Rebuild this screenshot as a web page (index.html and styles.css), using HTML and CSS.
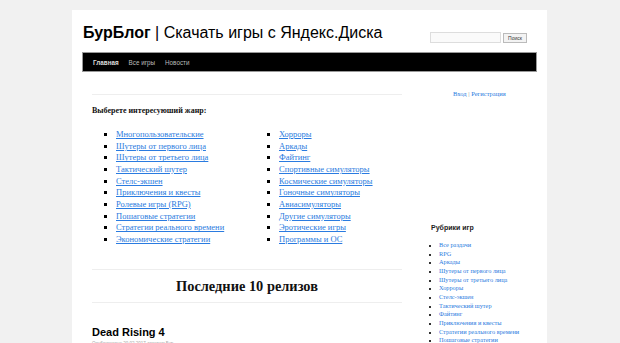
FILE: index.html
```html
<!DOCTYPE html>
<html lang="ru">
<head>
<meta charset="utf-8">
<title>БурБлог</title>
<link rel="stylesheet" href="styles.css">
</head>
<body>
<div class="wrapper">
  <header class="header">
    <h1 class="site-title"><b>БурБлог</b> | Скачать игры с Яндекс.Диска</h1>
    <form class="search">
      <input class="search-input" type="text">
      <button class="search-btn" type="button">Поиск</button>
    </form>
  </header>
  <nav class="nav">
    <a class="nav-item active">Главная</a>
    <a class="nav-item">Все игры</a>
    <a class="nav-item">Новости</a>
  </nav>
  <div class="main">
    <div class="content">
      <p class="genre-title">Выберете интересуюший жанр:</p>
      <div class="genres">
        <ul class="genre-list">
          <li><a>Многопользовательские</a></li>
          <li><a>Шутеры от первого лица</a></li>
          <li><a>Шутеры от третьего лица</a></li>
          <li><a>Тактический шутер</a></li>
          <li><a>Стелс-экшен</a></li>
          <li><a>Приключения и квесты</a></li>
          <li><a>Ролевые игры (RPG)</a></li>
          <li><a>Пошаговые стратегии</a></li>
          <li><a>Стратегии реального времени</a></li>
          <li><a>Экономические стратегии</a></li>
        </ul>
        <ul class="genre-list">
          <li><a>Хорроры</a></li>
          <li><a>Аркады</a></li>
          <li><a>Файтинг</a></li>
          <li><a>Спортивные симуляторы</a></li>
          <li><a>Космические симуляторы</a></li>
          <li><a>Гоночные симуляторы</a></li>
          <li><a>Авиасимуляторы</a></li>
          <li><a>Другие симуляторы</a></li>
          <li><a>Эротические игры</a></li>
          <li><a>Программы и ОС</a></li>
        </ul>
      </div>
      <h2 class="releases">Последние 10 релизов</h2>
      <article class="post">
        <h3 class="post-title">Dead Rising 4</h3>
        <div class="post-meta">Опубликовано 20.02.2017 автором Бур</div>
      </article>
    </div>
    <aside class="sidebar">
      <div class="login"><a>Вход</a> | <a>Регистрация</a></div>
      <h4 class="widget-title">Рубрики игр</h4>
      <ul class="cat-list">
        <li><a>Все раздачи</a></li>
        <li><a>RPG</a></li>
        <li><a>Аркады</a></li>
        <li><a>Шутеры от первого лица</a></li>
        <li><a>Шутеры от третьего лица</a></li>
        <li><a>Хорроры</a></li>
        <li><a>Стелс-экшен</a></li>
        <li><a>Тактический шутер</a></li>
        <li><a>Файтинг</a></li>
        <li><a>Приключения и квесты</a></li>
        <li><a>Стратегии реального времени</a></li>
        <li><a>Пошаговые стратегии</a></li>
      </ul>
    </aside>
  </div>
</div>
</body>
</html>
```
FILE: styles.css
```css
html, body {
  margin: 0;
  padding: 0;
  background: #f1f1f1;
  overflow: hidden;
  height: 343px;
}
a { color: #2a7be0; cursor: pointer; }
.wrapper {
  margin: 10px 0 0 72px;
  width: 455px;
  padding: 0 10px;
  background: #fff;
  height: 400px;
}
.header {
  display: flex;
  justify-content: space-between;
  align-items: flex-start;
  padding: 13px 0 0 1px;
  height: 29px;
}
.site-title {
  margin: 0;
  font: 400 16px/20px "Liberation Sans", Arial, sans-serif;
  color: #000;
}
.site-title b { font-weight: 700; }
.search {
  display: flex;
  gap: 2px;
  margin: 9px 10px 0 0;
}
.search-input {
  width: 71px;
  height: 11px;
  padding: 0;
  border: 1px solid #ddd;
  box-sizing: border-box;
  background: #fafafa;
}
.search-btn {
  width: 24px;
  height: 10px;
  margin-top: 1px;
  padding: 0;
  border: 1px solid #bbb;
  background: #f3f3f3;
  font: 5px/8px "Liberation Sans", Arial, sans-serif;
  color: #333;
}
.nav {
  display: flex;
  align-items: center;
  height: 18px;
  background: #000;
  border: 1px solid #999;
  box-sizing: content-box;
  padding-left: 10px;
  gap: 10px;
}
.nav-item {
  font: 400 6.3px "Liberation Sans", Arial, sans-serif;
  color: #bbb;
}
.nav-item.active { color: #ddd; font-weight: 700; }
.main {
  display: flex;
  padding: 22px 0 0 10px;
}
.content {
  width: 310px;
  flex-shrink: 0;
  border-top: 1px solid #eee;
  font-family: "Liberation Serif", "Times New Roman", serif;
}
.genre-title {
  margin: 11px 0 0;
  font: 700 8px/10px "Liberation Serif", serif;
  color: #111;
}
.genres {
  display: flex;
  padding: 13px 0 0 0;
}
.genre-list {
  margin: 0;
  padding: 0 0 0 24px;
  box-sizing: border-box;
  list-style: square;
  font: 400 8.5px/11.67px "Liberation Serif", serif;
  width: 163px;
  flex-shrink: 0;
}
.genre-list + .genre-list { width: auto; flex: 1; }
.genre-list a { text-decoration: underline; }
.genre-list li::marker { color: #000; font-size: 9px; }
.releases {
  margin: 23px 0 0;
  border-top: 1px solid #eee;
  border-bottom: 1px solid #eee;
  text-align: center;
  font: 700 14.4px/32px "Liberation Serif", serif;
  color: #111;
  height: 32px;
}
.post { padding-top: 23px; }
.post-title {
  margin: 0;
  font: 700 11px/13px "Liberation Sans", Arial, sans-serif;
  color: #000;
}
.post-meta {
  margin-top: 2px;
  font: 400 4.5px/6px "Liberation Sans", Arial, sans-serif;
  color: #aaa;
}
.sidebar {
  margin-left: 29px;
  width: 106px;
  font-family: "Liberation Serif", serif;
}
.login {
  margin: -5px 0 0 22px;
  font: 400 6.5px/10px "Liberation Serif", serif;
  color: #888;
}
.login a { text-decoration: none; }
.widget-title {
  margin: 124px 0 0;
  font: 700 7px/10px "Liberation Sans", Arial, sans-serif;
  color: #222;
}
.cat-list {
  margin: 8px 0 0;
  padding: 0 0 0 8px;
  list-style: square;
  font: 400 6.3px/8.67px "Liberation Serif", serif;
}
.cat-list a { text-decoration: none; }
.cat-list li::marker { color: #333; font-size: 6px; }
```
